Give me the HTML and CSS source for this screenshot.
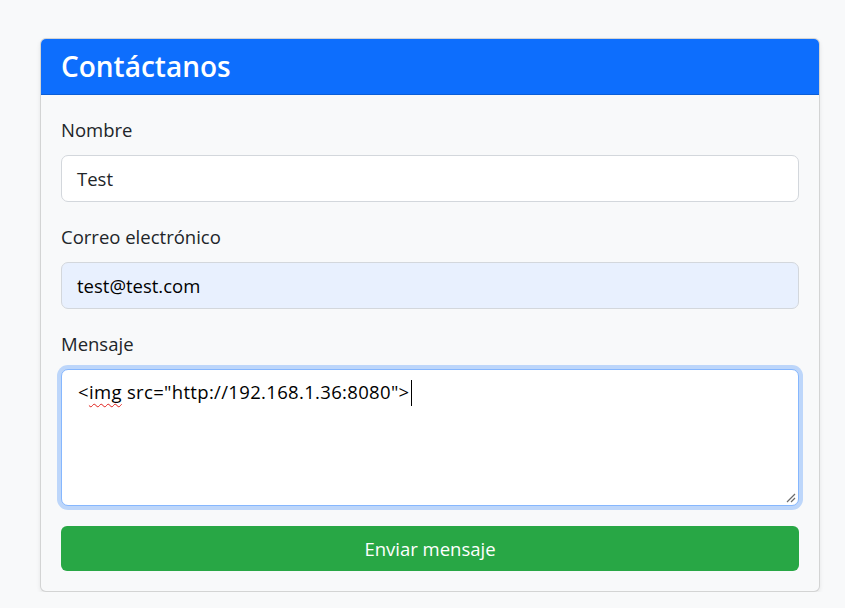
FILE: index.html
```html
<!DOCTYPE html>
<html lang="es">
<head>
<meta charset="utf-8">
<title>Contáctanos</title>
<link rel="stylesheet" href="styles.css">
</head>
<body>
<main class="page">
  <section class="card">
    <header class="card-header">
      <h4 class="card-title">Contáctanos</h4>
    </header>
    <form class="card-body">
      <div class="group">
        <label class="label">Nombre</label>
        <div class="control" role="textbox">Test</div>
      </div>
      <div class="group">
        <label class="label">Correo electrónico</label>
        <div class="control control-autofill" role="textbox">test@test.com</div>
      </div>
      <div class="group">
        <label class="label">Mensaje</label>
        <div class="control control-area" role="textbox">&lt;<span class="misspelled">img</span> src="http://192.168.1.36:8080"&gt;<span class="caret"></span><svg class="grip" width="10" height="10" viewBox="0 0 10 10"><path d="M9 1L1 9M9 5L5 9" stroke="#6b6b6b" stroke-width="1.2" fill="none"/></svg></div>
      </div>
      <button type="button" class="btn-send">Enviar mensaje</button>
    </form>
  </section>
</main>
</body>
</html>
```

FILE: styles.css
```css
* { box-sizing: border-box; }

html, body {
  margin: 0;
  padding: 0;
  background: #f8f9fa;
  font-family: "Open Sans", "Noto Sans", "Liberation Sans", sans-serif;
  color: #212529;
}

.page {
  padding: 38px 25px 0 40px;
}

.card {
  background: #f8f9fa;
  border: 1px solid rgba(0, 0, 0, 0.15);
  border-radius: 6px;
  box-shadow: 0 2px 4px rgba(0, 0, 0, 0.08);
}

.card-header {
  height: 56px;
  background: #0d6efd;
  border-bottom: 1px solid #0b5ed7;
  border-radius: 5px 5px 0 0;
  padding: 0 20px;
  display: flex;
  align-items: center;
}

.card-title {
  margin: 0;
  color: #fff;
  font-size: 28px;
  font-weight: 600;
  line-height: 1.2;
}

.card-body {
  padding: 21px 20px 20px 20px;
  display: flex;
  flex-direction: column;
}

.group {
  display: flex;
  flex-direction: column;
  margin-bottom: 21px;
}

.group:last-of-type {
  margin-bottom: 20px;
}

.label {
  font-size: 18.5px;
  line-height: 28px;
  margin-bottom: 11px;
}

.control {
  height: 47px;
  background: #fff;
  border: 1px solid #d3d7dc;
  border-radius: 7px;
  padding: 0 15px;
  font-size: 18.5px;
  line-height: 45px;
  color: #212529;
}

.control-autofill {
  background: #e8f0fe;
  color: #000;
}

.control-area {
  position: relative;
  height: 137px;
  line-height: 28px;
  padding: 8px 16px;
  border-color: #86b7fe;
  box-shadow: 0 0 0 4px rgba(13, 110, 253, 0.25);
  color: #000;
  letter-spacing: 0.33px;
}

.misspelled {
  text-decoration: underline wavy #e0201b;
  text-decoration-thickness: 1px;
  text-underline-offset: 4px;
}

.caret {
  display: inline-block;
  width: 1px;
  height: 26px;
  background: #000;
  vertical-align: -7px;
  margin-left: 1px;
}

.grip {
  position: absolute;
  right: 2px;
  bottom: 2px;
}

.btn-send {
  height: 45px;
  border: none;
  border-radius: 6px;
  background: #28a745;
  color: #fff;
  font-family: inherit;
  font-size: 18.5px;
  line-height: 45px;
  padding: 0;
  width: 100%;
}
```
